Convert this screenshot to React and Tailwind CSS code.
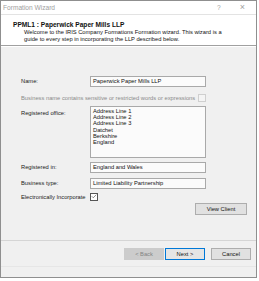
import { Check } from "lucide-react";

const font = { fontFamily: '"Liberation Sans", Arial, sans-serif' };

function Field({ label, children, className = "" }) {
  return (
    <div className={`flex items-center ${className}`}>
      <span className="w-[69px] shrink-0 whitespace-nowrap text-[5.75px] text-[#1a1a1a]">{label}</span>
      {children}
    </div>
  );
}

function Box({ children }) {
  return (
    <div className="flex h-[11px] w-[116px] items-center border border-[#a9a9a9] bg-[#fbfbfb] px-[2px] text-[5.75px] text-[#111]">
      {children}
    </div>
  );
}

function Btn({ children, disabled, primary, className = "" }) {
  return (
    <button
      className={`flex h-[12px] w-[40px] items-center justify-center text-[5.75px] ${
        primary
          ? "border border-[#0078d7] bg-[#e5e5e5] text-[#111]"
          : disabled
            ? "border border-[#cccccc] bg-[#cccccc] text-[#838383]"
            : "border border-[#adadad] bg-[#e1e1e1] text-[#111]"
      } ${className}`}
    >
      {children}
    </button>
  );
}

export default function App() {
  return (
    <div className="h-[281px] w-[259px] bg-white" style={font}>
      <div className="flex h-[278px] w-[257px] flex-col border border-[#8f8f8f] bg-[#f0f0f0]">
        {/* title bar */}
        <div className="flex h-[14px] shrink-0 items-center justify-between border-b border-[#e3e3e3] bg-white pl-[2px] pr-[11px]">
          <span className="text-[6.6px] text-[#a0a0a0]">Formation Wizard</span>
          <div className="flex items-center gap-[19px] text-[6.6px] text-[#a0a0a0]">
            <span>?</span>
            <span className="text-[9px] leading-none">×</span>
          </div>
        </div>

        {/* header */}
        <div className="h-[31px] shrink-0 border-b border-[#a0a0a0] bg-white pl-[12px] pt-[5px]">
          <div className="whitespace-nowrap text-[6.6px] font-bold leading-[9px] text-[#111]">
            PPML1 : Paperwick Paper Mills LLP
          </div>
          <div className="whitespace-nowrap pl-[11px] text-[5.75px] leading-[7px] text-[#111]">
            <div>Welcome to the IRIS Company Formations Formation wizard. This wizard is a</div>
            <div>guide to every step in incorporating the LLP described below.</div>
          </div>
        </div>
        <div className="h-px shrink-0 bg-white" />

        {/* body */}
        <div className="flex flex-1 flex-col pl-[20px] pt-[29px]">
          <Field label="Name:">
            <Box>Paperwick Paper Mills LLP</Box>
          </Field>

          <div className="mt-[7px] flex items-center">
            <span className="w-[177px] shrink-0 whitespace-nowrap text-[5.75px] text-[#8a8a8a]">
              Business name contains sensitive or restricted words or expressions
            </span>
            <div className="h-[8px] w-[8px] border border-[#cfcfcf] bg-[#f4f4f4]" />
          </div>

          <div className="mt-[3px] flex items-start">
            <span className="w-[69px] shrink-0 whitespace-nowrap pt-[3px] text-[5.75px] text-[#1a1a1a]">
              Registered office:
            </span>
            <div className="h-[52px] w-[116px] border border-[#a9a9a9] bg-[#fbfbfb] px-[2px] pt-[1px] text-[5.75px] leading-[6.3px] text-[#111]">
              <div>Address Line 1</div>
              <div>Address Line 2</div>
              <div>Address Line 3</div>
              <div>Datchet</div>
              <div>Berkshire</div>
              <div>England</div>
            </div>
          </div>

          <Field label="Registered in:" className="mt-[4px]">
            <Box>England and Wales</Box>
          </Field>

          <Field label="Business type:" className="mt-[5px]">
            <Box>Limited Liability Partnership</Box>
          </Field>

          <Field label="Electronically Incorporate" className="mt-[4px]">
            <div className="flex h-[8px] w-[8px] items-center justify-center border border-[#555] bg-white">
              <Check size={7} strokeWidth={2} className="text-[#222]" />
            </div>
          </Field>

          <div className="mt-[2px] flex pl-[174px]">
            <button className="flex h-[12px] w-[52px] items-center justify-center border border-[#adadad] bg-[#e1e1e1] text-[5.75px] text-[#111]">
              View Client
            </button>
          </div>
        </div>

        {/* footer */}
        <div className="h-[37px] shrink-0 border-t border-[#d5d5d5]">
          <div className="flex pl-[123px] pt-[7px]">
            <Btn disabled>&lt; Back</Btn>
            <Btn primary className="ml-[1px]">Next &gt;</Btn>
            <Btn className="ml-[6px]">Cancel</Btn>
          </div>
          <div className="mt-[6px] border-t border-[#e6e6e6]" />
        </div>
      </div>
    </div>
  );
}
